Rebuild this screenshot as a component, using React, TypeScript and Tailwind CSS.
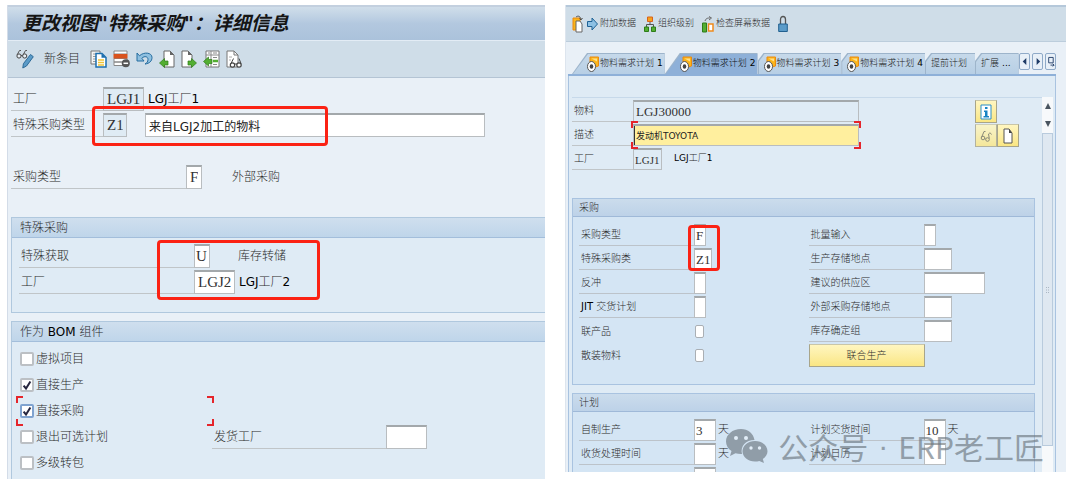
import React, { useState } from "react";

const Latin = ({ children }: { children: React.ReactNode }) => (
  <span className="font-normal text-black">{children}</span>
);

const fieldBase =
  "block border border-t-2 border-[#b9bdc0] border-t-[#a3a8ab] font-['Liberation_Serif','Noto_Sans_CJK_SC',serif] text-[#333] outline-none";

/* ---------- left window ---------- */

const FormRow = ({
  id,
  label,
  labelClass,
  children,
}: {
  id: string;
  label: React.ReactNode;
  labelClass: string;
  children: React.ReactNode;
}) => (
  <div className="flex h-6">
    <label
      htmlFor={id}
      className={`flex shrink-0 items-center border-b border-[#c0c5c8] pl-0.5 ${labelClass}`}
    >
      {label}
    </label>
    {children}
  </div>
);

const GroupTitle = ({ children }: { children: React.ReactNode }) => (
  <h2 className="flex h-5 items-center border-b border-[#a3bedb] bg-linear-to-b from-[#cfdfee] to-[#bfd5ea] pl-2 text-[12px]">
    {children}
  </h2>
);

const CheckRow = ({
  label,
  on = false,
  focused = false,
  children,
}: {
  label: string;
  on?: boolean;
  focused?: boolean;
  children?: React.ReactNode;
}) => {
  const [checked, setChecked] = useState(on);
  return (
    <div className="relative flex h-[26px] items-center pl-2">
      <label className="flex w-[192px] items-center gap-0.5">
        <span className="relative block size-[14px]">
          <input
            type="checkbox"
            checked={checked}
            onChange={(e) => setChecked(e.target.checked)}
            className={`block size-[14px] appearance-none rounded-[2px] border-2 bg-white ${
              focused ? "border-[#7fa3d0]" : "border-[#bcc0c4]"
            }`}
          />
          {checked && (
            <svg
              viewBox="0 0 14 14"
              className="pointer-events-none absolute inset-0 size-[14px]"
            >
              <path
                d="M3.6 7.6l2.4 2.9 4.4-7"
                fill="none"
                stroke="#26263f"
                strokeWidth="2"
              />
            </svg>
          )}
        </span>
        {label}
      </label>
      {focused && <FocusCorners className="-top-0.5 left-1 h-[30px] w-[198px]" />}
      {children}
    </div>
  );
};

const FocusCorners = ({ className }: { className: string }) => (
  <div className={`pointer-events-none absolute ${className}`}>
    <i className="absolute top-0 left-0 size-[7px] border-t-2 border-l-2 border-[#e5252b]" />
    <i className="absolute top-0 right-0 size-[7px] border-t-2 border-r-2 border-[#e5252b]" />
    <i className="absolute bottom-0 left-0 size-[7px] border-b-2 border-l-2 border-[#e5252b]" />
    <i className="absolute right-0 bottom-0 size-[7px] border-r-2 border-b-2 border-[#e5252b]" />
  </div>
);

const RedBox = ({ className }: { className: string }) => (
  <div
    className={`pointer-events-none absolute rounded-[4px] border-[3px] border-[#fb2214] ${className}`}
  />
);

const GlassesPencil = () => (
  <svg viewBox="0 0 18 20" className="h-5 w-[18px]" fill="none">
    <path d="M1 6L3.500 1.500h1.500M7 6l2.500-4.500H11M5 6.500h1.500" stroke="#555" />
    <circle cx="3" cy="7" r="2.100" fill="#e8eef4" stroke="#444" />
    <circle cx="8.700" cy="7" r="2.100" fill="#e8eef4" stroke="#444" />
    <path d="M14.500 5.500l2.800 2.200-6.800 9.300-3.700 2 .6-4.300z" fill="#5b9bc8" stroke="#2d6a97" />
  </svg>
);

const CopyIcon = () => (
  <svg viewBox="0 0 17 18" className="h-[18px] w-[17px]" fill="none">
    <path d="M1 1h9v13H1z" fill="#f4f4f4" stroke="#777" />
    <path d="M3 4h3M3 6.500h3M3 9h3M3 11.500h3" stroke="#999" />
    <path d="M6 3.500h6l4 4V17H6z" fill="#fff" stroke="#1d6fae" strokeWidth="1.500" />
    <path d="M11.500 3.500v4.300H16z" fill="#1d6fae" />
    <path d="M8 10h6M8 12.500h6M8 15h6" stroke="#f0c436" strokeWidth="1.500" />
  </svg>
);

const DeleteRowIcon = () => (
  <svg viewBox="0 0 17 18" className="h-[18px] w-[17px]" fill="none">
    <path d="M1 1h13v3H1zM1 8.500h13V12H1zM1 12h11v3.500H1z" fill="#fff" stroke="#888" />
    <path d="M.5 4h14v4.500H.5z" fill="#d9531e" />
    <circle cx="12.800" cy="13.300" r="4" fill="#555" />
    <path d="M10.500 13.300h4.600" stroke="#fff" strokeWidth="1.500" />
  </svg>
);

const UndoIcon = () => (
  <svg viewBox="0 0 17 18" className="h-[18px] w-[17px]" fill="none">
    <path
      d="M1 3v8h7L5.800 8.300C8.500 5.500 12 6.500 12 9.500c0 2.200-1.200 3.500-3 4.500 4.500-.5 7-3 7-6.500C16 2.500 8 1.500 3.500 5.800z"
      fill="#8fc0e0"
      stroke="#256c9f"
      strokeLinejoin="round"
    />
  </svg>
);

const DocArrow = ({ dir }: { dir: "left" | "right" }) => (
  <svg viewBox="0 0 16 19" className="h-[19px] w-4" fill="none">
    {dir === "left" ? (
      <>
        <path d="M5 1h6l4 4v12H5z" fill="#fff" stroke="#666" />
        <path d="M11 1v4h4z" fill="#666" />
        <path d="M.5 13l5-4.500v2.500H9v4H5.500v2.500z" fill="#53ae32" stroke="#2e7d18" strokeWidth=".7" />
      </>
    ) : (
      <>
        <path d="M1 1h6l4 4v12H1z" fill="#fff" stroke="#666" />
        <path d="M7 1v4h4z" fill="#666" />
        <path d="M15.500 13l-5-4.500v2.500H7v4h3.500v2.500z" fill="#53ae32" stroke="#2e7d18" strokeWidth=".7" />
      </>
    )}
  </svg>
);

const ListArrow = () => (
  <svg viewBox="0 0 17 19" className="h-[19px] w-[17px]" fill="none">
    <path d="M3 1h13v16H3z" fill="#fff" stroke="#777" />
    <path d="M3 5h13M8 1v16M5 3h2M10 3h4M10 7.500h4M10 14.500h4" stroke="#888" />
    <path d="M10 11h5" stroke="#53ae32" strokeWidth="2.500" />
    <path d="M.5 11.500l5-4.500v2.500H9v4H5.500V16z" fill="#53ae32" stroke="#2e7d18" strokeWidth=".7" />
  </svg>
);

const DocGlasses = () => (
  <svg viewBox="0 0 17 19" className="h-[19px] w-[17px]" fill="none">
    <path d="M1 1h7l4 4v12H1z" fill="#fff" stroke="#777" />
    <path d="M8 1v4h4" stroke="#777" />
    <path d="M3 7h3M3 10h2" stroke="#aaa" />
    <path d="M5 13.500l2.500-5M15 13.500l-2-5M8.500 14h2.500" stroke="#444" />
    <circle cx="6.500" cy="15" r="2.200" fill="#fff" stroke="#444" strokeWidth="1.200" />
    <circle cx="13" cy="15" r="2.200" fill="#fff" stroke="#444" strokeWidth="1.200" />
  </svg>
);

const ToolButton = ({
  name,
  children,
}: {
  name: string;
  children: React.ReactNode;
}) => (
  <button type="button" aria-label={name} className="flex items-center">
    {children}
  </button>
);

const LeftWindow = () => (
  <section className="min-w-0 border-l border-[#d3dce8] bg-[#e9f0f7] pl-[3px] text-[12px] text-[#2c2c2c]">
    <header className="-ml-[3px] flex h-9 items-center border-t-2 border-b border-t-[#c3d0df] border-b-[#e3ecf5] bg-linear-to-b from-[#d0deea] via-[#b3c8df] to-[#abc2db] pl-3.5">
      <h1 className="text-[19px] font-bold text-[#151515] italic whitespace-nowrap">
        更改视图"特殊采购"：详细信息
      </h1>
    </header>

    <nav className="-ml-[3px] flex h-[37px] items-center gap-1.5 border-b border-[#b4c4d4] bg-[#cfdde8] pl-2">
      <ToolButton name="显示/更改"><GlassesPencil /></ToolButton>
      <button type="button" className="mx-1 text-[12px]">
        新条目
      </button>
      <ToolButton name="复制"><CopyIcon /></ToolButton>
      <ToolButton name="删除"><DeleteRowIcon /></ToolButton>
      <ToolButton name="撤销"><UndoIcon /></ToolButton>
      <ToolButton name="上一条目"><DocArrow dir="left" /></ToolButton>
      <ToolButton name="下一条目"><DocArrow dir="right" /></ToolButton>
      <ToolButton name="其他条目"><ListArrow /></ToolButton>
      <ToolButton name="查找"><DocGlasses /></ToolButton>
    </nav>

    <div className="relative flex flex-col gap-0.5 pt-[9px]">
      <FormRow id="plant" label="工厂" labelClass="w-[92px]">
        <input id="plant" readOnly defaultValue="LGJ1" className={`${fieldBase} w-[41px] bg-[#dfebf4] px-[3px] text-[15px]`} />
        <span className="flex items-center pl-1">
          <Latin>LGJ</Latin>工厂<Latin>1</Latin>
        </span>
      </FormRow>
      <FormRow id="sptype" label="特殊采购类型" labelClass="w-[92px]">
        <input id="sptype" readOnly defaultValue="Z1" className={`${fieldBase} w-6 bg-[#dfebf4] px-[3px] text-[15px]`} />
        <div className={`${fieldBase} ml-[18px] mr-[60px] flex-1 bg-white`}>
          <input
            aria-label="特殊采购描述"
            defaultValue="来自LGJ2加工的物料"
            className="block h-full w-full px-[3px] font-['DejaVu_Sans','Noto_Sans_CJK_SC',sans-serif] text-[12px] font-normal text-[#222] outline-none"
          />
        </div>
      </FormRow>
      <RedBox className="top-7 left-[81px] h-10 w-[236px]" />
    </div>

    <div className="py-7">
      <FormRow id="ptype" label="采购类型" labelClass="w-[175px]">
        <input id="ptype" defaultValue="F" className={`${fieldBase} w-4 bg-white px-[3px] text-[15px]`} />
        <span className="flex items-center pl-[30px]">外部采购</span>
      </FormRow>
    </div>

    <section className="border border-r-0 border-[#b0c8de] bg-[#dfebf5]">
      <GroupTitle>特殊采购</GroupTitle>
      <div className="relative flex flex-col gap-0.5 pt-1.5 pb-[18px] pl-[7px]">
        <FormRow id="spget" label="特殊获取" labelClass="w-[175px]">
          <input id="spget" defaultValue="U" className={`${fieldBase} w-4 bg-white px-px text-[15px]`} />
          <span className="flex items-center pl-7">库存转储</span>
        </FormRow>
        <FormRow id="plant2" label="工厂" labelClass="w-[175px]">
          <input id="plant2" defaultValue="LGJ2" className={`${fieldBase} w-[41px] bg-white px-[3px] text-[15px]`} />
          <span className="flex items-center pl-1">
            <Latin>LGJ</Latin>工厂<Latin>2</Latin>
          </span>
        </FormRow>
        <RedBox className="top-0.5 left-[145px] h-[60px] w-[163px]" />
      </div>
    </section>

    <section className="mt-2 border border-r-0 border-b-0 border-[#b0c8de] bg-[#dfebf5]">
      <GroupTitle>
        作为&nbsp;<Latin>BOM</Latin>&nbsp;组件
      </GroupTitle>
      <div className="pt-1 pb-[3px]">
        <CheckRow label="虚拟项目" />
        <CheckRow label="直接生产" on />
        <CheckRow label="直接采购" on focused />
        <CheckRow label="退出可选计划">
          <FormRow id="issue" label="发货工厂" labelClass="w-[174px]">
            <input id="issue" className={`${fieldBase} w-[41px] bg-white px-[3px] text-[15px]`} />
          </FormRow>
        </CheckRow>
        <CheckRow label="多级转包" />
      </div>
    </section>
  </section>
);

/* ---------- right window ---------- */

const TabIcon = () => (
  <svg viewBox="0 0 12 17" className="h-[17px] w-3 shrink-0" fill="none">
    <path d="M3 1h8.500v9L8 11 3 6z" fill="#fbb51b" stroke="#ea8a10" />
    <path d="M4.500 2.500h5.500v3z" fill="#ffe08a" />
    <ellipse cx="4.500" cy="10.500" rx="4" ry="5" fill="#fff" stroke="#555" />
    <ellipse cx="4.500" cy="10.500" rx="1.800" ry="2.300" fill="#444" />
  </svg>
);

const tabs = [
  { name: "物料需求计划", num: "1", icon: true, wide: true },
  { name: "物料需求计划", num: "2", icon: true, wide: true },
  { name: "物料需求计划", num: "3", icon: true, wide: false },
  { name: "物料需求计划", num: "4", icon: true, wide: false },
  { name: "提前计划", num: "", icon: false, wide: false },
  { name: "扩展", num: "...", icon: false, wide: false },
];

const TabStrip = () => {
  const [active, setActive] = useState(1);
  return (
    <div className="flex h-[34px] items-end border-b-2 border-[#8eb0d8] pl-1">
      <div role="tablist" className="flex">
        {tabs.map((tab, i) => (
          <button
            key={i}
            type="button"
            role="tab"
            aria-selected={i === active}
            onClick={() => setActive(i)}
            className={`flex h-[21px] bg-[#9db4cb] pt-px pl-px ${
              tab.wide
                ? "[clip-path:polygon(15px_0,100%_0,100%_100%,0_100%)]"
                : "[clip-path:polygon(6px_0,100%_0,100%_100%,0_100%,0_8px)]"
            }`}
          >
            <span
              className={`flex h-5 items-center gap-px text-[9px] whitespace-nowrap ${
                tab.wide
                  ? "pr-0.5 pl-3.5 [clip-path:polygon(15px_0,100%_0,100%_100%,0_100%)]"
                  : "[clip-path:polygon(6px_0,100%_0,100%_100%,0_100%,0_8px)]"
              } ${!tab.wide && tab.icon ? "pr-0.5 pl-[5px]" : ""} ${
                !tab.icon ? "pr-2 pl-[5px]" : ""
              } ${
                i === active
                  ? "bg-[#8eb0d8] text-[#111]"
                  : "bg-linear-to-b from-[#c6d9ea] to-[#b7cfe5] text-[#222]"
              }`}
            >
              {tab.icon && <TabIcon />}
              {tab.name}
              {tab.num && (
                <span className="pl-0.5 font-normal text-black">{tab.num}</span>
              )}
            </span>
          </button>
        ))}
      </div>
      <div className="mr-px mb-1 ml-auto flex gap-0.5">
        {["M7 4v8L3 8z", "M4 4v8l4-4z", "M3 3.500h5v6H3zM5 12h4l-1.500-1.500M9 12l-1.500 1.500"].map((d, i) => (
          <button
            key={d}
            type="button"
            aria-label={["向左", "向右", "列表"][i]}
            className="rounded-[2px] border border-[#8faac8] bg-[#e8f0f8]"
          >
            <svg viewBox="0 0 10 16" className="h-[15px] w-[9px]">
              <path d={d} fill={i < 2 ? "#1f3b66" : "none"} stroke="#1f3b66" strokeWidth={i < 2 ? 0 : 1} />
            </svg>
          </button>
        ))}
      </div>
    </div>
  );
};

const Cell = ({
  id,
  label,
  field,
  value = "",
  unit,
}: {
  id: string;
  label: React.ReactNode;
  field: string;
  value?: string;
  unit?: string;
}) => (
  <div className="flex h-[22px]">
    <label htmlFor={id} className="flex w-[115px] items-center border-b border-[#bcc3ca] pl-0.5">
      {label}
    </label>
    <input id={id} defaultValue={value} className={`${fieldBase} bg-white pl-px text-[13px] ${field}`} />
    {unit && <span className="flex items-center pl-0.5 text-[11px]">{unit}</span>}
  </div>
);

const SmallCheck = ({ id, label }: { id: string; label: string }) => (
  <div className="flex h-[22px] items-center">
    <label htmlFor={id} className="w-[116px] pl-0.5">
      {label}
    </label>
    <input
      id={id}
      type="checkbox"
      className="h-[13px] w-[9px] appearance-none rounded-[2px] border border-[#aaafb4] bg-white checked:bg-[#444]"
    />
  </div>
);

const SmallGroup = ({
  title,
  className,
  children,
}: {
  title: string;
  className: string;
  children: React.ReactNode;
}) => (
  <section className={`mr-[7px] border border-[#a9c3e0] bg-[#d4e5f4] ${className}`}>
    <h2 className="flex h-[18px] items-center border-b border-[#9fb9d8] bg-linear-to-b from-[#cbdcec] to-[#bdd2e8] pl-1.5">
      {title}
    </h2>
    <div className="grid grid-cols-2 gap-x-1 gap-y-0.5 pt-[7px] pl-1.5">{children}</div>
  </section>
);

const yellowButton =
  "flex h-[23px] items-center justify-center border border-[#a8a58a] border-t-[#c9c6a8] bg-linear-to-b from-[#fff6c0] to-[#fae683]";

const RightWindow = () => (
  <section className="relative min-w-0 border-l border-[#dde5ee] bg-[#e9f0f7] text-[10px] text-[#2c2c2c]">
    <nav className="flex h-[37px] items-center border-t-2 border-b border-t-[#b5c8da] border-b-[#bccddc] bg-[#cfdde8] pl-1.5 text-[9px] whitespace-nowrap">
      <ToolButton name="其他物料">
        <svg viewBox="0 0 11 18" className="h-[18px] w-[11px]" fill="none">
          <path d="M1 3h7v12H1z" fill="#fbb51b" stroke="#ea8a10" />
          <path d="M4 6h4l2 3v8H4z" fill="#fff" stroke="#666" />
          <path d="M4 2c2-1.500 4-1 5 2M7.500 3.500L9 5l1.500-2" stroke="#333" strokeWidth=".8" />
        </svg>
      </ToolButton>
      <button type="button" className="ml-1 flex items-center gap-0.5">
        <svg viewBox="0 0 11 14" className="h-3.5 w-[11px]" fill="none">
          <path d="M.5 4.500h4.500V1l5.500 6L5 13V9.500H.5z" fill="#8cc0e4" stroke="#1f6295" />
        </svg>
        附加数据
      </button>
      <button type="button" className="ml-2 flex items-center gap-0.5">
        <svg viewBox="0 0 12 16" className="h-4 w-3" fill="none">
          <path d="M6 5v4M2.500 11V8.500h7V11" stroke="#555" />
          <path d="M3.500 1h5v4.500h-5z" fill="#f5a21d" stroke="#d8621b" />
          <path d="M.5 11h4v4.500h-4zM7.500 11h4v4.500h-4z" fill="#53ae32" stroke="#2e7d18" />
        </svg>
        组织级别
      </button>
      <button type="button" className="ml-2 flex items-center gap-0.5">
        <svg viewBox="0 0 12 17" className="h-[17px] w-3" fill="none">
          <path d="M3 5c1-3 3-3 5-3M7 .5L9.500 2 7 4" stroke="#666" />
          <path d="M.5 7h4v9h-4z" fill="#53ae32" stroke="#2e7d18" />
          <path d="M6.500 8h4.500v7H6.500z" fill="#fff" stroke="#ef8b1d" strokeWidth="1.500" />
        </svg>
        检查屏幕数据
      </button>
      <button type="button" aria-label="锁定" className="ml-2">
        <svg viewBox="0 0 10 18" className="h-[18px] w-2.5" fill="none">
          <path d="M2.500 9V4.500c0-4 5-4 5 0V9" stroke="#555" strokeWidth="1.300" />
          <path d="M.7 9h8.600v7.500H.7z" fill="#5b9bc8" stroke="#22608f" />
        </svg>
      </button>
    </nav>

    <div className="mr-2.5 ml-0.5">
      <TabStrip />
      <div className="flex border-x border-[#a9c3e0] bg-[#dfebf5] pt-[21px] pr-0.5 pl-[3px]">
        <div className="min-w-0 flex-1 border-t border-[#c7d9ea]">
          <div className="relative flex flex-col gap-px pt-0.5">
            <div className="flex h-[23px] items-start">
              <label htmlFor="mat" className="flex h-[22px] w-[61px] items-center border-b border-[#c0c5c8] pl-0.5">
                物料
              </label>
              <input id="mat" readOnly defaultValue="LGJ30000" className={`${fieldBase} h-[22px] w-[226px] bg-[#dfebf5] px-0.5 text-[13px]`} />
              <div className="mr-[23px] ml-auto flex w-11">
                <button type="button" aria-label="信息" className={`${yellowButton} w-[22px]`}>
                  <svg viewBox="0 0 12 16" className="h-4 w-3" fill="none">
                    <path d="M1 1h10v14H1z" fill="#fff" stroke="#2a8fc9" />
                    <path d="M5 3h2.500v2H5zM4 6.500h3.500V12H9v1.500H3.500V12H5V8H4z" fill="#1784c4" />
                  </svg>
                </button>
              </div>
            </div>
            <div className="flex h-[23px] items-start">
              <label htmlFor="desc" className="flex h-[22px] w-[61px] items-center border-b border-[#c0c5c8] pl-0.5">
                描述
              </label>
              <div className="relative">
                <div className={`${fieldBase} h-[22px] w-[226px] bg-[#ffef9e]`}>
                  <input
                    id="desc"
                    defaultValue="发动机TOYOTA"
                    className="block h-full w-full border-l border-[#333] pl-px font-['DejaVu_Sans','Noto_Sans_CJK_SC',sans-serif] text-[9px] font-normal text-[#222] outline-none"
                  />
                </div>
                <FocusCorners className="-top-[3px] -left-0.5 h-7 w-[230px]" />
              </div>
              <div className="mr-[23px] ml-auto flex w-11">
                <button type="button" aria-label="显示" className={`${yellowButton} w-[22px] opacity-80`}>
                  <svg viewBox="0 0 12 14" className="h-3.5 w-3" fill="none" stroke="#77735a">
                    <path d="M1.500 8.500L4 2.500h1.500M4.800 9.500l.8.500M9.300 9.500L8.500 5c1-1.500 2.500-1 3 .5" />
                    <circle cx="3" cy="9" r="1.800" />
                    <circle cx="7.500" cy="10.500" r="1.800" />
                  </svg>
                </button>
                <button type="button" aria-label="新建" className={`${yellowButton} w-[22px]`}>
                  <svg viewBox="0 0 10 16" className="h-4 w-2.5" fill="none">
                    <path d="M1 1h5l3 4v10H1z" fill="#fff" stroke="#555" />
                    <path d="M6 1v4h3z" fill="#444" />
                  </svg>
                </button>
              </div>
            </div>
            <div className="flex h-[23px] items-start">
              <label htmlFor="werk" className="flex h-[22px] w-[61px] items-center border-b border-[#c0c5c8] pl-0.5">
                工厂
              </label>
              <input id="werk" readOnly defaultValue="LGJ1" className={`${fieldBase} h-[22px] w-[29px] bg-[#dfebf5] pl-px text-[11px]`} />
              <span className="flex h-[22px] items-center pl-3 text-[9px]">
                <Latin>LGJ</Latin>工厂<Latin>1</Latin>
              </span>
            </div>
          </div>

          <SmallGroup title="采购" className="mt-[27px] pb-[17px]">
            <div className="relative">
              <Cell id="r1" label="采购类型" field="w-3" value="F" />
              <RedBox className="top-px left-[109px] h-[46px] w-8" />
            </div>
            <Cell id="r2" label="批量输入" field="w-3" />
            <Cell id="r3" label="特殊采购类" field="w-[18px]" value="Z1" />
            <Cell id="r4" label="生产存储地点" field="w-7" />
            <Cell id="r5" label="反冲" field="w-3" />
            <Cell id="r6" label="建议的供应区" field="w-[61px]" />
            <Cell id="r7" label={<><Latin>JIT</Latin>&nbsp;交货计划</>} field="w-3" />
            <Cell id="r8" label="外部采购存储地点" field="w-7" />
            <SmallCheck id="r9" label="联产品" />
            <Cell id="r10" label="库存确定组" field="w-7" />
            <SmallCheck id="r11" label="散装物料" />
            <button type="button" className={`${yellowButton} w-[116px]`}>
              联合生产
            </button>
          </SmallGroup>

          <SmallGroup title="计划" className="mt-2 border-b-0">
            <Cell id="p1" label="自制生产" field="w-[22px]" value="3" unit="天" />
            <Cell id="p2" label="计划交货时间" field="w-[22px]" value="10" unit="天" />
            <Cell id="p3" label="收货处理时间" field="w-[22px]" unit="天" />
            <Cell id="p4" label="计划日历" field="w-[22px]" />
            <div className="h-[5px] overflow-hidden">
              <Cell id="p5" label="计划边际码" field="w-[22px]" />
            </div>
          </SmallGroup>
        </div>

        <div className="flex w-[11px] flex-col bg-[#f7f9fb]">
          <button type="button" aria-label="向上滚动" className="flex h-[18px] items-center justify-center">
            <svg viewBox="0 0 6 6" className="size-1.5"><path d="M3 0l3 6H0z" fill="#4a5560" /></svg>
          </button>
          <button type="button" aria-label="向下滚动" className="flex h-[18px] items-center justify-center">
            <svg viewBox="0 0 6 6" className="size-1.5"><path d="M0 0h6L3 6z" fill="#4a5560" /></svg>
          </button>
          <div className="mb-[26px] flex flex-1 items-center justify-center border border-[#b9cbdd] bg-[#dfe8f1]">
            <svg viewBox="0 0 4 6" className="h-1.5 w-1"><path d="M0 .5h4M0 3h4M0 5.500h4" stroke="#aab6c3" strokeDasharray="1 1" /></svg>
          </div>
        </div>
      </div>
    </div>

    <div className="pointer-events-none absolute right-[22px] bottom-1.5 flex items-center gap-2.5 font-['Noto_Sans_CJK_SC',sans-serif] text-[30px] leading-[40px] font-normal whitespace-nowrap text-[#6d7780] opacity-65">
      <svg viewBox="0 0 42 34" className="h-[34px] w-[42px]">
        <path
          d="M15 0C6.500 0 0 5.500 0 12.500c0 4 2.200 7.300 5.500 9.600L4 27l5.500-2.700c1.700.5 3.500.8 5.500.8h1C14 17 20 11 28.500 11 27.500 4.500 22 0 15 0z"
          fill="currentColor"
        />
        <path
          d="M29 12c-7 0-12.500 4.500-12.500 10.300S22 32.500 29 32.500c1.500 0 3-.2 4.300-.6L38 34l-1.200-4c2.800-1.800 4.700-4.600 4.700-7.700C41.500 16.500 36 12 29 12z"
          fill="currentColor"
        />
        <g fill="#eaf2fa">
          <circle cx="10" cy="9" r="2" />
          <circle cx="20" cy="9" r="2" />
          <circle cx="25" cy="19" r="1.700" />
          <circle cx="33.500" cy="19" r="1.700" />
        </g>
      </svg>
      <span>公众号</span>
      <span className="font-['Liberation_Sans',sans-serif]">·</span>
      <span>ERP老工匠</span>
    </div>
  </section>
);

export default function App() {
  return (
    <main className="grid grid-cols-[538fr_501fr] items-start gap-5 bg-white pt-[5px] pr-3.5 pb-3 pl-[7px] font-['DejaVu_Sans','Noto_Sans_CJK_SC',sans-serif] font-light">
      <LeftWindow />
      <RightWindow />
    </main>
  );
}
